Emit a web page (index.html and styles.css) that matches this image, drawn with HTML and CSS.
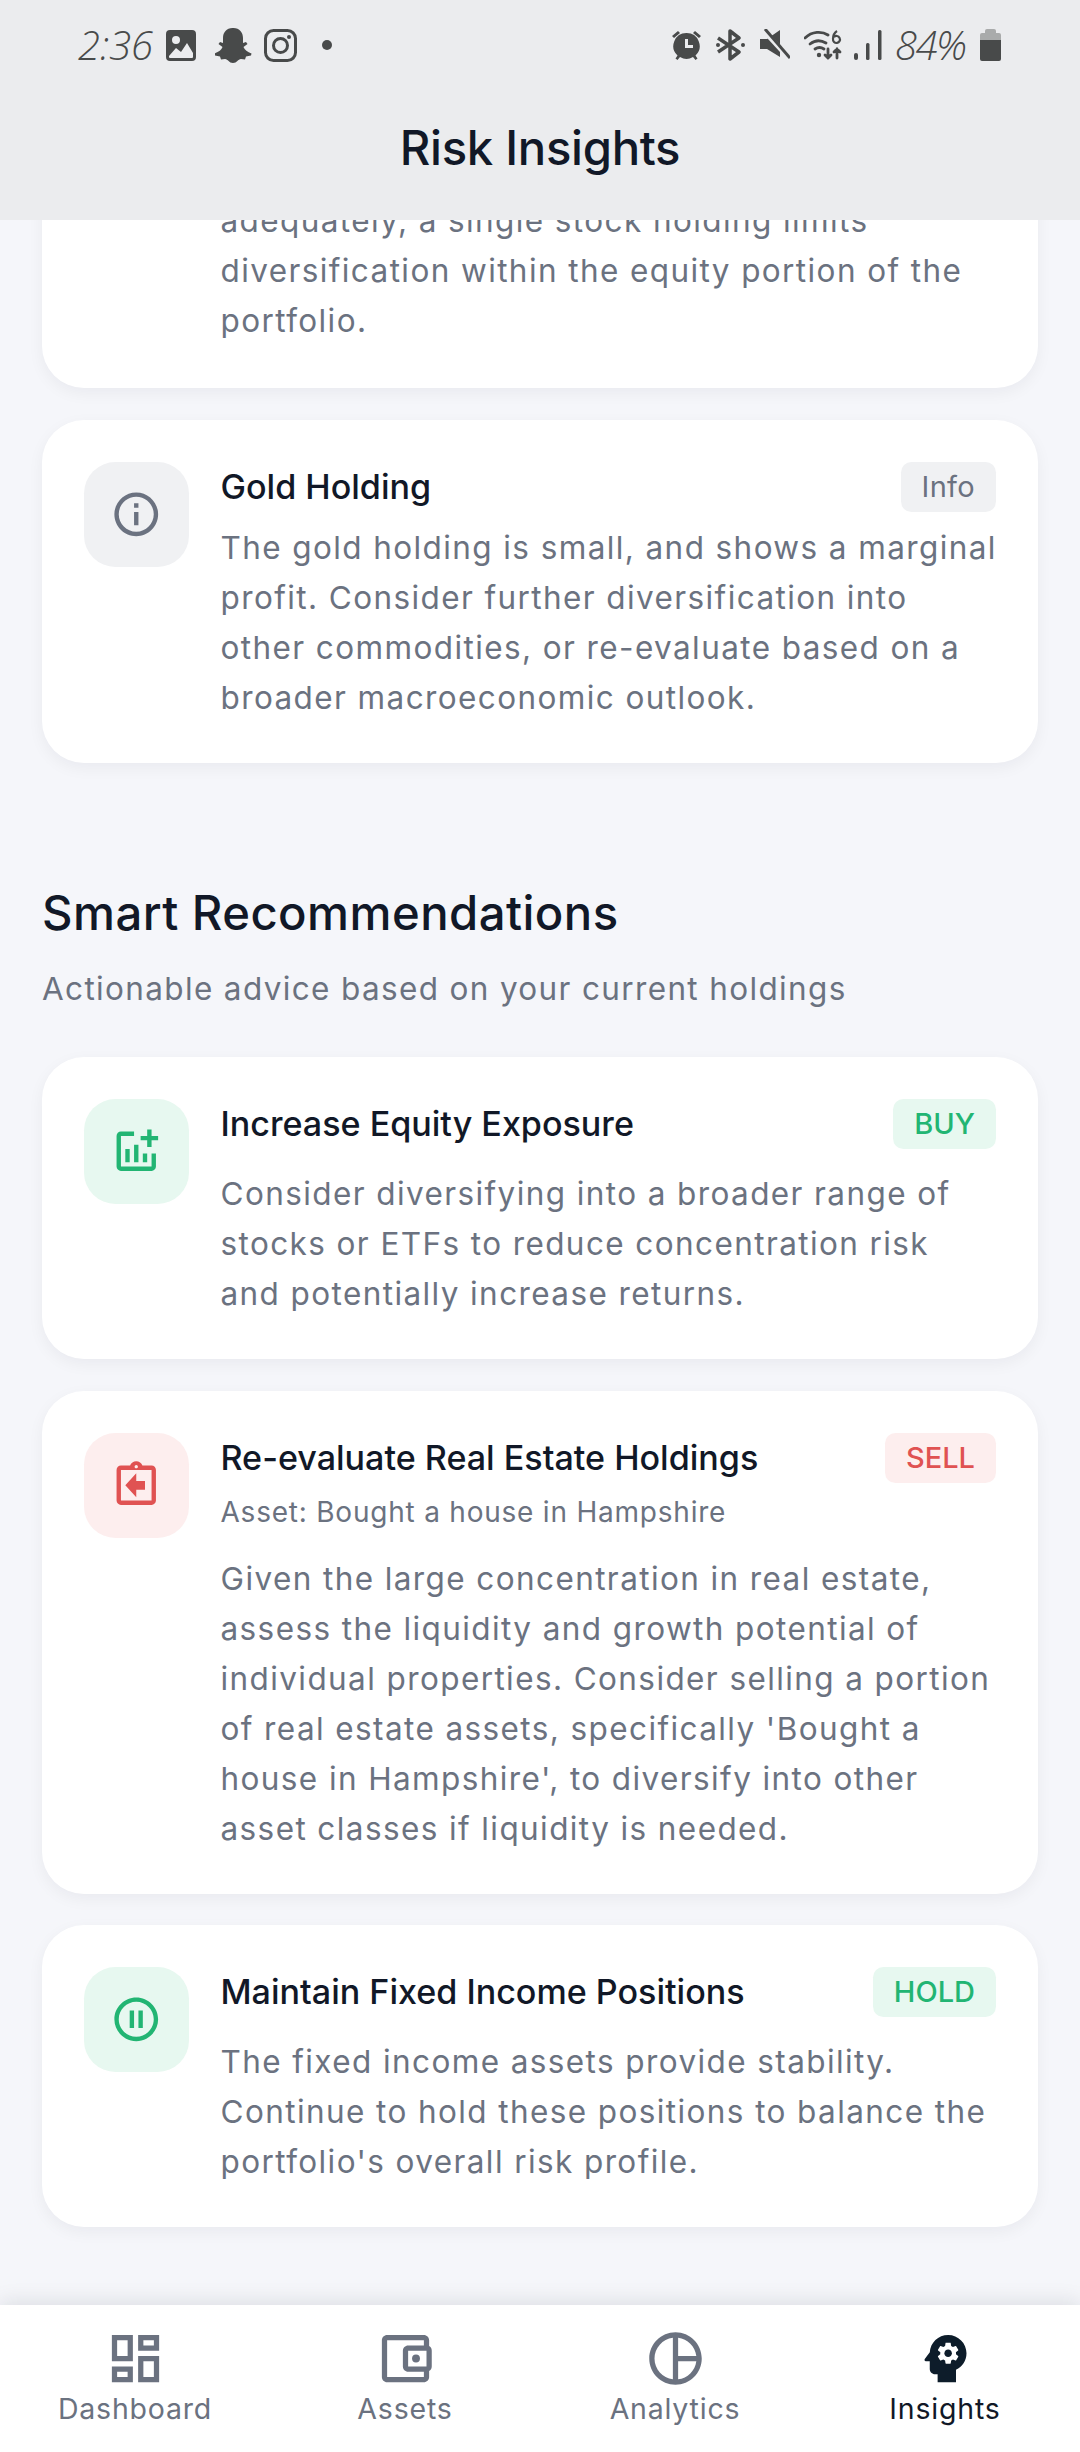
FILE: index.html
```html
<!DOCTYPE html>
<html lang="en">
<head>
<meta charset="utf-8">
<title>Risk Insights</title>
<link rel="stylesheet" href="styles.css">
</head>
<body>
<div class="app">
  <header class="top">
    <div class="status">
      <div class="status-group">
        <span class="clock">2:36</span>
        <svg class="si si-img" viewBox="0 0 30 31"><path fill-rule="evenodd" d="M4 0h22a4 4 0 0 1 4 4v23a4 4 0 0 1-4 4H4a4 4 0 0 1-4-4V4a4 4 0 0 1 4-4zM3 26v1a1 1 0 0 0 1 1h22a1 1 0 0 0 1-1v-4l-6-10-6 9-5-4zM10 6a4 4 0 1 0 0 8 4 4 0 0 0 0-8z"/></svg>
        <svg class="si si-snap" viewBox="0 0 37 35"><path d="M18.500 0c6 0 9.500 4.500 9.500 10v5l3-1 1.500 2-4 3c1 3 4 5 8 6.500l-.5 2-5 1-1 3-4-.5c-3 0-4 4-8 4s-5-4-8-4l-4 .5-1-3-5-1-.5-2c4-1.500 7-3.500 8-6.500l-4-3 1.500-2 3 1v-5c0-5.500 3.500-10 9.500-10z"/></svg>
        <svg class="si si-insta" viewBox="0 0 33 33"><rect x="1.500" y="1.500" width="30" height="30" rx="8" fill="none" stroke-width="3"/><circle cx="16.500" cy="16.500" r="7" fill="none" stroke-width="3"/><circle cx="25" cy="8" r="2" class="si-fill"/></svg>
        <span class="dot"></span>
      </div>
      <div class="status-group status-right">
        <svg class="si si-alarm" viewBox="0 0 29 32"><path fill-rule="evenodd" d="M14.500 4a13 13 0 0 1 9 22.500l2 3-2 1.500-2.500-3a13 13 0 0 1-13 0l-2.500 3-2-1.500 2-3a13 13 0 0 1 9-22.500zM13 10v9h8v-3h-5v-6z"/><path d="M0 7l6-5 2 2-6 5zM29 7l-6-5-2 2 6 5z"/></svg>
        <svg class="si si-bt" viewBox="0 0 29 32"><path fill="none" stroke-width="3.500" stroke-linejoin="round" d="M2 9l21 14-9 7V2l9 7L2 23"/><circle cx="2" cy="16" r="2" class="si-fill"/><circle cx="27" cy="16" r="2" class="si-fill"/></svg>
        <svg class="si si-mute" viewBox="0 0 30 32"><path d="M0 10h7L20 1v27L7 20H0z"/><path d="M3 1l26 28" fill="none" stroke-width="5" class="si-cut"/><path d="M5 0l25 29" fill="none" stroke-width="3"/></svg>
        <svg class="si si-wifi" viewBox="0 0 40 32"><g fill="none" stroke-width="2.800" stroke-linecap="round"><path d="M1 9c7-7 17-7 23-3"/><path d="M6 15c5-4 11-4 16-1"/><path d="M11 20c3-2 6-2 9 0"/><path d="M24 20v9M21 26l3 3 3-3M33 29v-9M30 23l3-3 3 3"/></g><circle cx="15" cy="26" r="2.200" class="si-fill"/><path d="M33 2c-3 2-4 5-4 8a3.500 3.500 0 1 0 1-2" fill="none" stroke-width="2.200"/></svg>
        <svg class="si si-signal" viewBox="0 0 28 32"><rect x="0" y="24" width="4" height="7" rx="2" class="si-fill"/><rect x="12" y="14" width="3.500" height="17" rx="1.500" class="si-fill"/><rect x="24" y="1" width="3.500" height="30" rx="1.500" class="si-fill"/></svg>
        <span class="pct">84%</span>
        <svg class="si si-batt" viewBox="0 0 21 32"><path d="M7 0h7a2 2 0 0 1 2 2v2h3a2 2 0 0 1 2 2v5H0V6a2 2 0 0 1 2-2h3V2a2 2 0 0 1 2-2z" class="si-pale"/><path d="M0 11h21v19a2 2 0 0 1-2 2H2a2 2 0 0 1-2-2z" class="si-fill"/></svg>
      </div>
    </div>
    <h1 class="title">Risk Insights</h1>
  </header>

  <main class="content">
    <section class="card card-clipped">
      <div class="icon-spacer"></div>
      <div class="card-main">
        <p class="body">adequately, a single stock holding limits diversification within the equity portion of the portfolio.</p>
      </div>
    </section>

    <section class="card">
      <div class="icon-box tone-gray">
        <svg class="ic" viewBox="0 0 24 24"><path d="M11 7h2v2h-2zm0 4h2v6h-2zm1-9C6.480 2 2 6.480 2 12s4.480 10 10 10 10-4.480 10-10S17.520 2 12 2zm0 18c-4.410 0-8-3.590-8-8s3.590-8 8-8 8 3.590 8 8-3.590 8-8 8z"/></svg>
      </div>
      <div class="card-main">
        <div class="card-head head-tight">
          <h3 class="card-title">Gold Holding</h3>
          <span class="badge tone-gray">Info</span>
        </div>
        <p class="body">The gold holding is small, and shows a marginal profit. Consider further diversification into other commodities, or re-evaluate based on a broader macroeconomic outlook.</p>
      </div>
    </section>

    <h2 class="section-title">Smart Recommendations</h2>
    <p class="section-sub">Actionable advice based on your current holdings</p>

    <section class="card">
      <div class="icon-box tone-green">
        <svg class="ic" viewBox="0 0 24 24"><path d="M22 5v2h-3v3h-2V7h-3V5h3V2h2v3h3zm-3 14H5V5h6V3H5c-1.100 0-2 .9-2 2v14c0 1.100.9 2 2 2h14c1.100 0 2-.9 2-2v-6h-2v6zm-4-6v4h2v-4h-2zm-4 4h2V9h-2v8zm-2 0v-6H7v6h2z"/></svg>
      </div>
      <div class="card-main">
        <div class="card-head">
          <h3 class="card-title">Increase Equity Exposure</h3>
          <span class="badge tone-green">BUY</span>
        </div>
        <p class="body">Consider diversifying into a broader range of stocks or ETFs to reduce concentration risk<br>and potentially increase returns.</p>
      </div>
    </section>

    <section class="card">
      <div class="icon-box tone-red">
        <svg class="ic" viewBox="0 0 24 24"><path d="M19 3h-4.180C14.400 1.840 13.300 1 12 1s-2.400.84-2.820 2H5c-1.100 0-2 .9-2 2v14c0 1.100.9 2 2 2h14c1.100 0 2-.9 2-2V5c0-1.100-.9-2-2-2zm-7-.25c.41 0 .75.34.75.75s-.34.75-.75.75-.75-.34-.75-.75.34-.75.75-.75zM19 19H5V5h14v14z"/><path d="M16 14h-4v3.500L7 12l5-5.500V10h4z"/></svg>
      </div>
      <div class="card-main">
        <div class="card-head head-asset">
          <h3 class="card-title">Re-evaluate Real Estate Holdings</h3>
          <span class="badge tone-red">SELL</span>
        </div>
        <p class="asset">Asset: Bought a house in Hampshire</p>
        <p class="body">Given the large concentration in real estate, assess the liquidity and growth potential of individual properties. Consider selling a portion of real estate assets, specifically 'Bought a house in Hampshire', to diversify into other asset classes if liquidity is needed.</p>
      </div>
    </section>

    <section class="card">
      <div class="icon-box tone-green">
        <svg class="ic" viewBox="0 0 24 24"><path d="M9 16h2V8H9v8zm3-14C6.480 2 2 6.480 2 12s4.480 10 10 10 10-4.480 10-10S17.520 2 12 2zm0 18c-4.410 0-8-3.590-8-8s3.590-8 8-8 8 3.590 8 8-3.590 8-8 8zm1-4h2V8h-2v8z"/></svg>
      </div>
      <div class="card-main">
        <div class="card-head">
          <h3 class="card-title">Maintain Fixed Income Positions</h3>
          <span class="badge tone-green">HOLD</span>
        </div>
        <p class="body">The fixed income assets provide stability. Continue to hold these positions to balance the portfolio's overall risk profile.</p>
      </div>
    </section>
  </main>

  <nav class="nav">
    <div class="nav-item">
      <svg class="nav-ic" viewBox="0 0 24 24"><path d="M19 5v2h-4V5h4M9 5v6H5V5h4m10 8v6h-4v-6h4M9 17v2H5v-2h4M21 3h-8v6h8V3zM11 3H3v10h8V3zm10 8h-8v10h8V11zm-10 4H3v6h8v-6z"/></svg>
      <span>Dashboard</span>
    </div>
    <div class="nav-item">
      <svg class="nav-ic" viewBox="0 0 24 24"><path d="M21 7.280V5c0-1.100-.9-2-2-2H5c-1.110 0-2 .9-2 2v14c0 1.100.89 2 2 2h14c1.100 0 2-.9 2-2v-2.280c.59-.35 1-.98 1-1.720V9c0-.74-.41-1.370-1-1.720zM20 9v6h-7V9h7zM5 19V5h14v2h-6c-1.100 0-2 .9-2 2v6c0 1.100.9 2 2 2h6v2H5z"/><circle cx="16" cy="12" r="1.500"/></svg>
      <span>Assets</span>
    </div>
    <div class="nav-item">
      <svg class="nav-ic" viewBox="0 0 24 24"><path d="M12 2C6.490 2 2 6.490 2 12s4.490 10 10 10 10-4.490 10-10S17.510 2 12 2zm1 2.070c3.610.45 6.480 3.330 6.930 6.930H13V4.070zM4 12c0-4.060 3.070-7.440 7-7.930v15.870c-3.930-.5-7-3.880-7-7.940zm9 7.930V13h6.930c-.45 3.610-3.320 6.480-6.930 6.930z"/></svg>
      <span>Analytics</span>
    </div>
    <div class="nav-item nav-active">
      <svg class="nav-ic" viewBox="0 0 24 24"><path d="M13 8.570c-.79 0-1.430.64-1.430 1.430s.64 1.430 1.430 1.430 1.430-.64 1.430-1.430-.64-1.430-1.430-1.430z"/><path d="M13 3C9.250 3 6.200 5.940 6.020 9.640L4.100 12.200c-.25.33-.01.8.4.8H6v3c0 1.100.9 2 2 2h1v3h7v-4.680c2.360-1.120 4-3.530 4-6.320 0-3.870-3.130-7-7-7zm3 7c0 .13-.01.26-.02.39l.83.66c.08.06.1.16.05.25l-.8 1.390c-.05.09-.16.12-.24.09l-.99-.4c-.21.16-.43.29-.67.39L14 13.830c-.01.1-.1.17-.2.17h-1.600c-.1 0-.18-.07-.2-.17l-.15-1.060c-.25-.1-.47-.23-.68-.39l-.99.4c-.09.03-.2 0-.25-.09l-.8-1.390c-.05-.08-.03-.19.05-.25l.84-.66c-.01-.13-.02-.26-.02-.39s.02-.27.04-.39l-.85-.66c-.08-.06-.1-.16-.05-.26l.8-1.380c.05-.09.15-.12.24-.09l1 .4c.2-.15.43-.29.67-.39L12 6.170c.02-.1.1-.17.2-.17h1.600c.1 0 .18.07.2.17l.15 1.060c.24.1.46.23.67.39l1-.4c.09-.03.2 0 .24.09l.8 1.380c.05.09.03.2-.05.26l-.85.66c.03.12.04.25.04.39z"/></svg>
      <span>Insights</span>
    </div>
  </nav>
</div>
</body>
</html>
```

FILE: styles.css
```css
* { box-sizing: border-box; }
html, body { margin: 0; padding: 0; }
body {
  font-family: Inter, "Liberation Sans", sans-serif;
  color: #111827;
  background: #f5f6fa;
}
h1, h2, h3, p { margin: 0; font-weight: 400; }

.app {
  width: 1080px;
  height: 2452px;
  display: flex;
  flex-direction: column;
  overflow: hidden;
}

/* Header and status bar */
.top {
  flex: none;
  height: 220px;
  background: #ebecee;
  display: flex;
  flex-direction: column;
  position: relative;
  z-index: 2;
}
.status {
  display: flex;
  justify-content: space-between;
  align-items: center;
  height: 40px;
  margin-top: 25px;
  padding: 0 79px 0 78px;
}
.status-group { display: flex; align-items: center; }
.clock, .pct {
  font-family: "Open Sans", sans-serif;
  font-style: italic;
  color: #484a4a;
  font-size: 40px;
  line-height: 40px;
  font-weight: 300;
}
.clock { width: 88px; letter-spacing: 0; }
.pct { width: 85px; margin-left: 13px; letter-spacing: -1.500px; }
.si { display: block; fill: #484a4a; stroke: #484a4a; stroke-width: 0; flex: none; }
.si-fill { fill: #484a4a; stroke: none; }
.si-pale { fill: #a9abab; stroke: none; }
.si-cut { stroke: #ebecee; }
.si-img { width: 30px; height: 31px; }
.si-snap { width: 37px; height: 35px; margin-left: 19px; }
.si-insta { width: 33px; height: 33px; margin-left: 12px; }
.dot { width: 10px; height: 10px; border-radius: 50%; background: #484a4a; margin-left: 25px; }
.si-alarm { width: 29px; height: 32px; }
.si-bt { width: 29px; height: 32px; margin-left: 15px; }
.si-mute { width: 30px; height: 32px; margin-left: 15px; }
.si-wifi { width: 40px; height: 32px; margin-left: 14px; }
.si-signal { width: 28px; height: 32px; margin-left: 10px; }
.si-batt { width: 21px; height: 32px; }

.title {
  margin-top: 53px;
  text-align: center;
  font-size: 47.250px;
  line-height: 60px;
  letter-spacing: -0.300px;
  font-weight: 500;
  color: #111827;
}

/* Scrolling content */
.content {
  flex: 1;
  min-height: 0;
  overflow: hidden;
  padding: 0 42px;
  display: flex;
  flex-direction: column;
  gap: 31.500px;
}
.card {
  flex: none;
  display: flex;
  gap: 31.500px;
  padding: 42px 42px 40px;
  background: #fff;
  border-radius: 42px;
  box-shadow: 0 5px 16px rgba(17, 24, 39, 0.05);
}
.card-clipped { margin-top: -66px; padding-bottom: 42px; }
.icon-spacer { flex: none; width: 105px; }
.icon-box {
  flex: none;
  width: 105px;
  height: 105px;
  border-radius: 31.500px;
  display: flex;
  align-items: center;
  justify-content: center;
}
.ic { width: 52.500px; height: 52.500px; fill: currentColor; }
.tone-gray { background: #f0f1f3; color: #6b7280; }
.tone-green { background: #e7f8f0; color: #22b573; }
.tone-red { background: #fdeeee; color: #e05252; }

.card-main { flex: 1; min-width: 0; }
.card-head {
  display: flex;
  justify-content: space-between;
  align-items: center;
  height: 50px;
  margin-bottom: 20px;
}
.head-tight { margin-bottom: 11px; }
.head-asset { margin-bottom: 7px; }
.card-title {
  font-size: 34.100px;
  line-height: 50px;
  font-weight: 500;
  color: #111827;
}
.badge {
  padding: 0 21px;
  height: 50px;
  line-height: 50px;
  border-radius: 10.500px;
  font-size: 29px;
  font-weight: 500;
}
.badge.tone-gray { font-weight: 400; letter-spacing: 0.300px; }
.asset {
  font-size: 28px;
  line-height: 44px;
  letter-spacing: 0.780px;
  color: #6b7280;
  margin-bottom: 20px;
}
.body {
  font-size: 31.500px;
  line-height: 50px;
  letter-spacing: 1.400px;
  color: #6b7280;
  margin-right: -6px;
}
.section-title {
  font-size: 47.250px;
  line-height: 60px;
  letter-spacing: 0.450px;
  font-weight: 500;
  color: #111827;
  margin-top: 89px;
  margin-bottom: -9px;
}
.section-sub {
  font-size: 31.500px;
  line-height: 46px;
  letter-spacing: 1.350px;
  color: #6b7280;
  margin-bottom: 14px;
}

/* Bottom navigation */
.nav {
  flex: none;
  height: 147px;
  background: #fff;
  display: grid;
  grid-template-columns: repeat(4, 1fr);
  padding-top: 22px;
  box-shadow: 0 -3px 20px rgba(17, 24, 39, 0.11);
  position: relative;
}
.nav-item {
  display: flex;
  flex-direction: column;
  align-items: center;
  color: #6b7280;
  font-size: 28.500px;
  line-height: 38px;
  letter-spacing: 0.800px;
}
.nav-ic { width: 63px; height: 63px; fill: currentColor; display: block; }
.nav-active { color: #111827; }
.nav-active .nav-ic { fill: #0d1c2a; }
```
